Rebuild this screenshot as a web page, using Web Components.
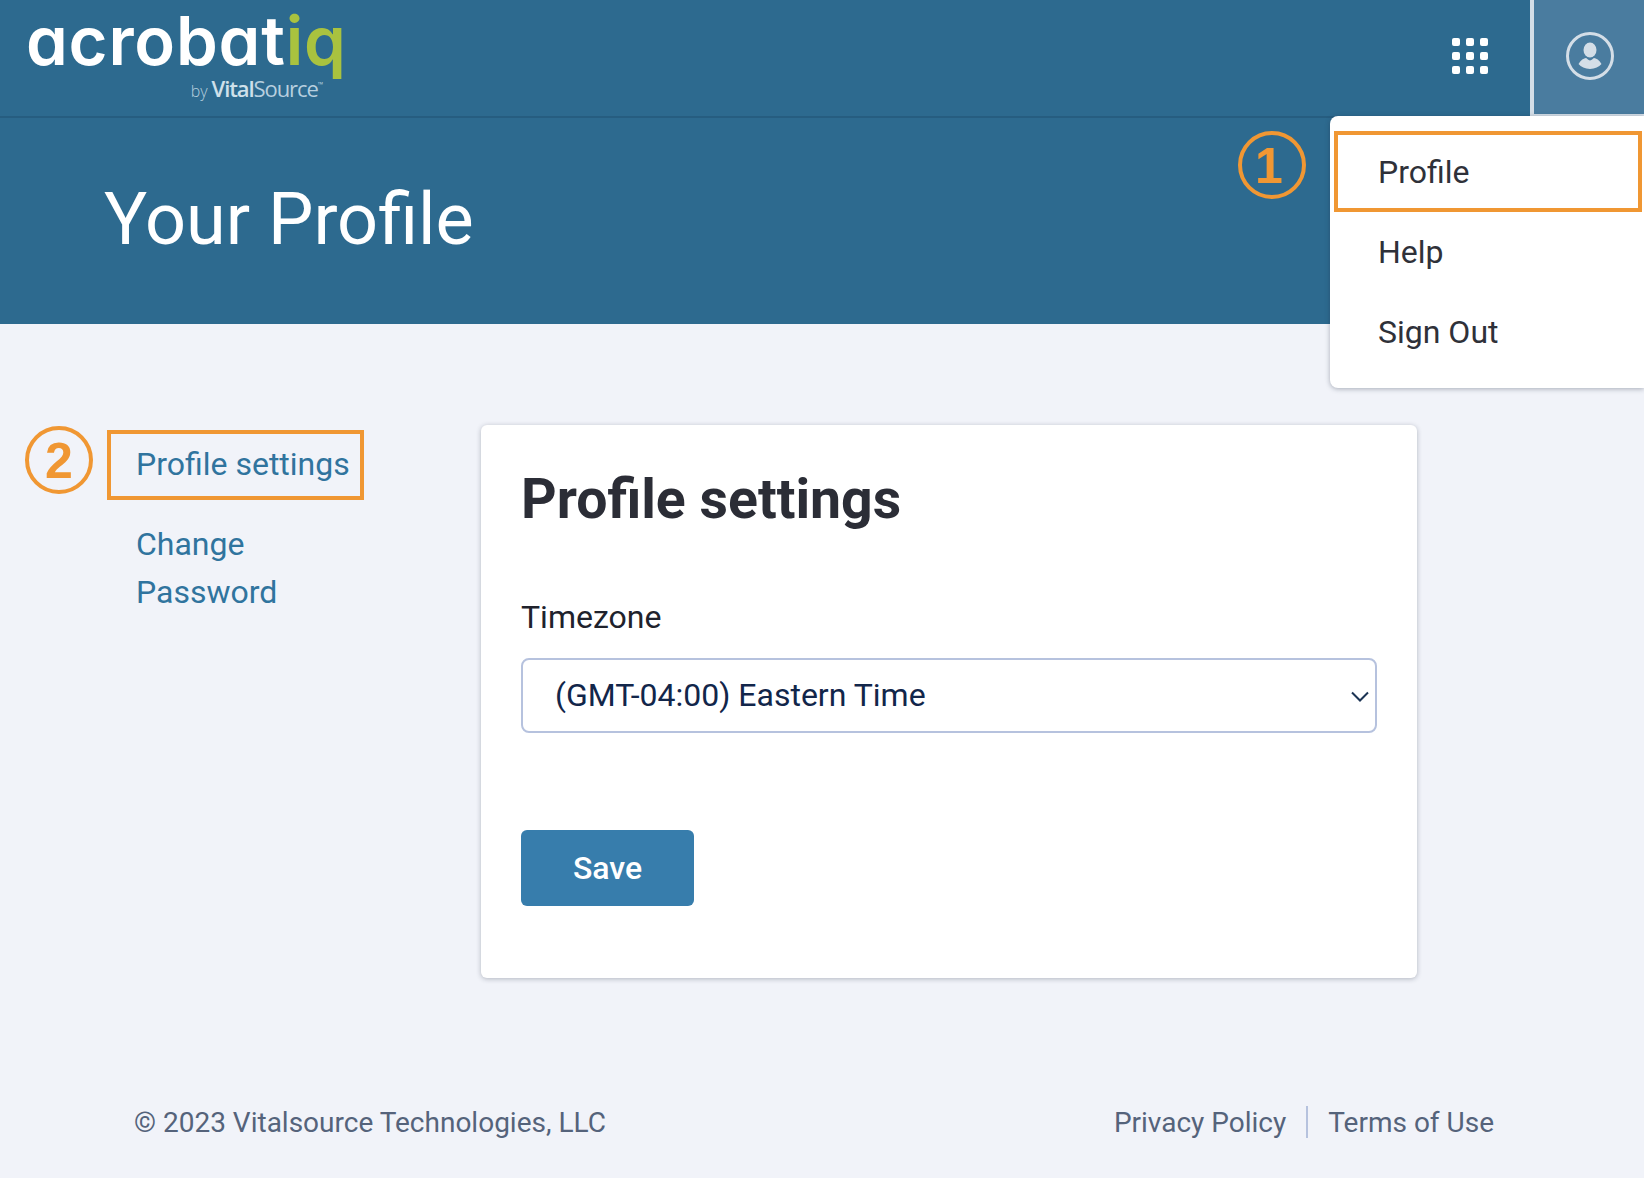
<!DOCTYPE html>
<html lang="en">
<head>
<meta charset="utf-8">
<title>Your Profile</title>
<style>
    html, body { margin: 0; padding: 0; }
    body {
        width: 1644px;
        height: 1178px;
        overflow: hidden;
        background: #f1f3f9;
        font-family: Roboto, "Liberation Sans", sans-serif;
        position: relative;
    }
</style>
</head>
<body>
<app-header></app-header>
<profile-hero>Your Profile</profile-hero>
<user-menu></user-menu>
<div style="display:grid;grid-template-columns:481px 936px;padding-top:101px;">
    <side-nav></side-nav>
    <settings-card></settings-card>
</div>
<page-footer></page-footer>
<step-badge style="left:1238px;top:131px;padding-right:6px;">1</step-badge>
<step-badge style="left:25px;top:426px;">2</step-badge>

<script>
class AppHeader extends HTMLElement {
    constructor() {
        super();
        this.attachShadow({ mode: 'open' });
        // 3x3 launcher dots
        let dots = '';
        for (let y = 0; y < 3; y++) {
            for (let x = 0; x < 3; x++) {
                dots += `<rect x="${x * 14}" y="${y * 14}" width="8" height="8" rx="2"/>`;
            }
        }
        this.shadowRoot.innerHTML = `
            <style>
                :host {
                    display: flex;
                    align-items: stretch;
                    justify-content: space-between;
                    height: 118px;
                    background: #2d6a8f;
                    box-sizing: border-box;
                    border-bottom: 2px solid #265d80;
                }
                .logo {
                    padding: 0 0 0 26px;
                    display: flex;
                    flex-direction: column;
                    align-items: flex-end;
                    width: 320px;
                    font-family: Inter, sans-serif;
                }
                .word {
                    font-size: 67px;
                    font-weight: 600;
                    font-feature-settings: "cv11" 1;
                    line-height: 78px;
                    letter-spacing: .8px;
                    color: #fff;
                    margin-top: 2px;
                    align-self: flex-start;
                    white-space: nowrap;
                }
                .word span { color: #a9c23f; }
                .by {
                    font-family: "Open Sans", sans-serif;
                    font-size: 22px;
                    line-height: 26px;
                    color: #b7cfdf;
                    letter-spacing: -1.1px;
                    margin: -5px 23px 0 0;
                    white-space: nowrap;
                }
                .by small { font-size: 16px; font-weight: 300; letter-spacing: 0; margin-right: 4px; }
                .by b { font-weight: 600; color: #cfe0ea; }
                .by sup { font-size: 7px; letter-spacing: 0; vertical-align: 10px; line-height: 0; }
                .right { display: flex; align-items: stretch; }
                .apps { display: flex; align-items: center; margin-right: 42px; padding-bottom: 4px; }
                .apps svg { display: block; fill: #fff; }
                .user {
                    width: 114px;
                    box-sizing: border-box;
                    background: #4a7c9f;
                    border-left: 4px solid #d4dee7;
                    border-bottom: 4px solid #d4dee7;
                    margin-bottom: -2px;
                    display: flex;
                    align-items: center;
                    justify-content: center;
                    padding-bottom: 2px;
                    padding-left: 1px;
                }
            </style>
            <div class="logo">
                <div class="word">acrobat<span>iq</span></div>
                <div class="by"><small>by</small><b>Vital</b>Source<sup>™</sup></div>
            </div>
            <div class="right">
                <div class="apps"><svg width="36" height="36" viewBox="0 0 36 36">${dots}</svg></div>
                <div class="user">
                    <svg width="48" height="48" viewBox="0 0 48 48" fill="none">
                        <circle cx="24" cy="24" r="22.500" stroke="#d4dee7" stroke-width="3"/>
                        <ellipse cx="24" cy="18" rx="6.500" ry="7.500" fill="#d4dee7"/>
                        <path d="M12.500 32c2-3.800 5.500-6 7.500-6 1 0 2 2.500 4 2.500s3-2.500 4-2.500c2 0 5.500 2.200 7.500 6-2.500 2.800-6.500 5-11.500 5s-9-2.200-11.500-5z" fill="#d4dee7"/>
                    </svg>
                </div>
            </div>
        `;
    }
}

class ProfileHero extends HTMLElement {
    constructor() {
        super();
        this.attachShadow({ mode: 'open' });
        this.shadowRoot.innerHTML = `
            <style>
                :host {
                    display: block;
                    height: 206px;
                    background: #2d6a8f;
                    box-sizing: border-box;
                    padding: 60px 0 0 104px;
                    color: #fff;
                    font-size: 72px;
                    line-height: 84px;
                }
            </style>
            <slot></slot>
        `;
    }
}

class UserMenu extends HTMLElement {
    constructor() {
        super();
        this.attachShadow({ mode: 'open' });
        this.shadowRoot.innerHTML = `
            <style>
                :host {
                    display: block;
                    position: absolute;
                    left: 1330px;
                    top: 116px;
                    width: 314px;
                    height: 272px;
                    box-sizing: border-box;
                    padding-top: 16px;
                    background: #fff;
                    border-radius: 8px 0 0 8px;
                    box-shadow: 0 1px 5px rgba(30, 40, 60, .35);
                    color: #2f3139;
                    font-size: 32px;
                }
                div {
                    height: 80px;
                    line-height: 80px;
                    padding-left: 48px;
                }
                .on {
                    height: 81px;
                    line-height: 75px;
                    padding-left: 40px;
                    margin: -1px 2px 0 4px;
                    box-sizing: border-box;
                    border: 4px solid #f09733;
                }
            </style>
            <div class="on">Profile</div>
            <div>Help</div>
            <div>Sign Out</div>
        `;
    }
}

class SideNav extends HTMLElement {
    constructor() {
        super();
        this.attachShadow({ mode: 'open' });
        this.shadowRoot.innerHTML = `
            <style>
                :host {
                    display: block;
                    padding: 5px 0 0 136px;
                    color: #30749e;
                    font-size: 32px;
                    line-height: 48px;
                }
                .on {
                    position: relative;
                    margin-bottom: 20px;
                    height: 70px;
                    line-height: 68px;
                    white-space: nowrap;
                }
                .on::before {
                    content: "";
                    position: absolute;
                    left: -29px;
                    top: 0;
                    width: 257px;
                    height: 70px;
                    box-sizing: border-box;
                    border: 4px solid #f09733;
                }
                .plain { width: 200px; }
            </style>
            <div class="on">Profile settings</div>
            <div class="plain">Change Password</div>
        `;
    }
}

class SettingsCard extends HTMLElement {
    constructor() {
        super();
        this.attachShadow({ mode: 'open' });
        this.shadowRoot.innerHTML = `
            <style>
                :host {
                    display: block;
                    height: 553px;
                    box-sizing: border-box;
                    padding: 42px 40px 0 40px;
                    background: #fff;
                    border-radius: 6px;
                    box-shadow: 0 1px 5px rgba(30, 40, 60, .3);
                }
                h1 {
                    margin: 0;
                    font-size: 55.4px;
                    line-height: 66px;
                    font-weight: 700;
                    color: #2b2d36;
                }
                label {
                    display: block;
                    margin-top: 64px;
                    font-size: 32px;
                    line-height: 40px;
                    color: #20222c;
                }
                .select {
                    display: flex;
                    align-items: center;
                    justify-content: space-between;
                    height: 75px;
                    margin-top: 21px;
                    box-sizing: border-box;
                    padding: 0 6px 0 32px;
                    border: 2px solid #b6c2de;
                    border-radius: 8px;
                    font-size: 32px;
                    color: #12264a;
                }
                .select span { margin-top: -1px; }
                .select svg { margin-top: 2px; }
                .save {
                    width: 173px;
                    height: 76px;
                    margin-top: 97px;
                    display: flex;
                    align-items: center;
                    justify-content: center;
                    background: #377dac;
                    border-radius: 6px;
                    color: #fff;
                    font-size: 32px;
                    font-weight: 500;
                }
            </style>
            <h1>Profile settings</h1>
            <label>Timezone</label>
            <div class="select">
                <span>(GMT-04:00) Eastern Time</span>
                <svg width="18" height="12" viewBox="0 0 18 12" fill="none"><path d="M1 1.500l8 8 8-8" stroke="#1c3454" stroke-width="2"/></svg>
            </div>
            <div class="save">Save</div>
        `;
    }
}

class PageFooter extends HTMLElement {
    constructor() {
        super();
        this.attachShadow({ mode: 'open' });
        this.shadowRoot.innerHTML = `
            <style>
                :host {
                    display: flex;
                    justify-content: space-between;
                    align-items: center;
                    width: 1360px;
                    box-sizing: border-box;
                    margin: 124px 0 0 134px;
                    height: 40px;
                    font-size: 28px;
                    color: #55637b;
                }
                .links { display: flex; align-items: center; }
                .sep { width: 2px; height: 32px; background: #b6c2de; margin: 0 20px; }
            </style>
            <span>© 2023 Vitalsource Technologies, LLC</span>
            <span class="links"><span>Privacy Policy</span><span class="sep"></span><span>Terms of Use</span></span>
        `;
    }
}

class StepBadge extends HTMLElement {
    constructor() {
        super();
        this.attachShadow({ mode: 'open' });
        this.shadowRoot.innerHTML = `
            <style>
                :host {
                    display: flex;
                    align-items: center;
                    justify-content: center;
                    position: absolute;
                    width: 68px;
                    height: 68px;
                    box-sizing: border-box;
                    padding-top: 2px;
                    border: 4px solid #f09733;
                    border-radius: 50%;
                    color: #f09733;
                    font-family: "Liberation Sans", sans-serif;
                    font-weight: 700;
                    font-size: 50px;
                    line-height: 1;
                }
            </style>
            <slot></slot>
        `;
    }
}

customElements.define('app-header', AppHeader);
customElements.define('profile-hero', ProfileHero);
customElements.define('user-menu', UserMenu);
customElements.define('side-nav', SideNav);
customElements.define('settings-card', SettingsCard);
customElements.define('page-footer', PageFooter);
customElements.define('step-badge', StepBadge);
</script>
</body>
</html>
